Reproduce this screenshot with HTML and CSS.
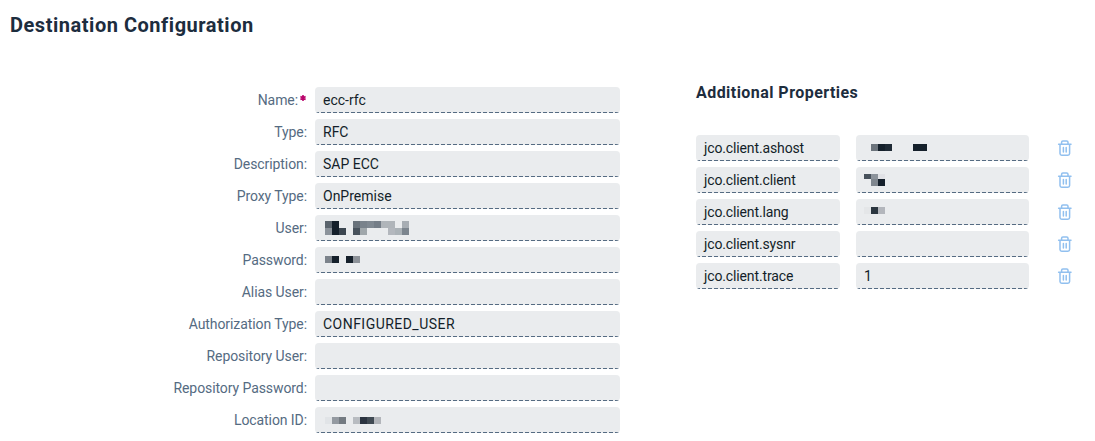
FILE: index.html
```
<!DOCTYPE html>
<html lang="en">
<head>
<meta charset="utf-8">
<title>Destination Configuration</title>
<link rel="stylesheet" href="styles.css">
</head>
<body>
<svg class="defs" width="0" height="0" aria-hidden="true">
  <symbol id="trash" viewBox="0 0 16 18">
    <path d="M1.6 5.2h12.4M4.6 4.9V3.2q0-1.3 1.3-1.3h3.8q1.3 0 1.3 1.3v1.7M3 5.4v9.2q0 1.7 1.7 1.7h6.2q1.7 0 1.7-1.7V5.4M6.4 8.4v4.6M9.2 8.4v4.6" fill="none" stroke="currentColor" stroke-width="1.5" stroke-linecap="round"/>
  </symbol>
</svg>
<main class="page">
  <h1 class="title">Destination Configuration</h1>
  <div class="content">
    <section class="form">
      <div class="label"><span>Name:</span><svg class="required" viewBox="0 0 8 8"><path d="M4 1v6M1.4 2.5l5.2 3M6.6 2.5l-5.2 3" stroke="currentColor" stroke-width="1.6"/></svg></div><div class="field">ecc-rfc</div>
      <div class="label">Type:</div><div class="field">RFC</div>
      <div class="label">Description:</div><div class="field">SAP ECC</div>
      <div class="label">Proxy Type:</div><div class="field">OnPremise</div>
      <div class="label">User:</div>
      <div class="field"><svg class="mask" width="100" height="26" shape-rendering="crispEdges">
        <g transform="translate(2 6)">
          <path fill="#5b646d" d="M0 0h7v7H0z"/><path fill="#15202b" d="M7 0h7v14H7z"/><path fill="#69727b" d="M28 0h7v7h-7z"/><path fill="#79828b" d="M35 0h7v7h-7z"/><path fill="#7f8891" d="M42 0h7v7h-7z"/><path fill="#747d87" d="M49 0h7v7h-7z"/><path fill="#b0b5ba" d="M56 0h14v7H56z"/><path fill="#a7adb3" d="M77 0h7v7h-7z"/>
          <path fill="#8c939b" d="M0 7h7v7H0z"/><path fill="#3c4650" d="M14 7h7v7h-7z"/><path fill="#48525c" d="M28 7h7v7h-7z"/><path fill="#a0a7ab" d="M35 7h7v7h-7z"/><path fill="#b3b7bd" d="M63 7h7v7h-7z"/><path fill="#abb2b7" d="M70 7h7v7h-7z"/><path fill="#7c858e" d="M77 7h7v7h-7z"/>
        </g></svg></div>
      <div class="label">Password:</div>
      <div class="field"><svg class="mask" width="100" height="26" shape-rendering="crispEdges">
        <path fill="#7c838b" d="M2 9h7v7H2z"/><path fill="#15202b" d="M9 9h7v7H9zM23 9h7v7h-7z"/><path fill="#8d9299" d="M30 9h7v7h-7z"/></svg></div>
      <div class="label">Alias User:</div><div class="field"></div>
      <div class="label">Authorization Type:</div><div class="field caps">CONFIGURED_USER</div>
      <div class="label">Repository User:</div><div class="field"></div>
      <div class="label">Repository Password:</div><div class="field"></div>
      <div class="label">Location ID:</div>
      <div class="field"><svg class="mask" width="100" height="26" shape-rendering="crispEdges">
        <path fill="#e1e4e7" d="M2 10h7v7H2z"/><path fill="#949aa1" d="M9 10h7v7H9z"/><path fill="#747b82" d="M16 10h7v7h-7z"/><path fill="#b8bcc1" d="M30 10h7v7h-7z"/><path fill="#2b3440" d="M37 10h7v7h-7z"/><path fill="#404a53" d="M44 10h7v7h-7z"/><path fill="#b2b5ba" d="M51 10h7v7h-7z"/></svg></div>
    </section>
    <section class="properties">
      <h2 class="subtitle">Additional Properties</h2>
      <div class="grid">
        <div class="field key">jco.client.ashost</div>
        <div class="field"><svg class="mask" width="100" height="26" shape-rendering="crispEdges">
          <path fill="#6c747c" d="M7 9h7v7H7z"/><path fill="#15202b" d="M14 9h7v7h-7zM49 9h14v7H49z"/><path fill="#1f2a35" d="M21 9h7v7h-7z"/></svg></div>
        <svg class="trash"><use href="#trash"/></svg>
        <div class="field key">jco.client.client</div>
        <div class="field"><svg class="mask" width="100" height="26" shape-rendering="crispEdges">
          <path fill="#48525c" d="M0 7h7v5H0z"/><path fill="#8c939b" d="M7 7h7v5H7z"/><path fill="#e1e2e6" d="M14 7h7v5h-7z"/><path fill="#80878f" d="M7 12h7v7H7z"/><path fill="#15202b" d="M14 12h7v7h-7z"/></svg></div>
        <svg class="trash"><use href="#trash"/></svg>
        <div class="field key">jco.client.lang</div>
        <div class="field"><svg class="mask" width="100" height="26" shape-rendering="crispEdges">
          <path fill="#e4e6e8" d="M0 8h7v7H0z"/><path fill="#2b3640" d="M7 8h7v7H7z"/><path fill="#b3b6bc" d="M14 8h7v7h-7z"/></svg></div>
        <svg class="trash"><use href="#trash"/></svg>
        <div class="field key">jco.client.sysnr</div>
        <div class="field"></div>
        <svg class="trash"><use href="#trash"/></svg>
        <div class="field key">jco.client.trace</div>
        <div class="field">1</div>
        <svg class="trash"><use href="#trash"/></svg>
      </div>
    </section>
  </div>
</main>
</body>
</html>
```
FILE: styles.css
```
* { box-sizing: border-box; }
body { margin: 0; background: #fff; color: #131e29; font-family: Roboto, "Liberation Sans", sans-serif; font-size: 14px; overflow: hidden; }
.defs { display: block; height: 0; }
.page { width: 1095px; height: 441px; padding: 10px 10px 0; }
.title { margin: 0; height: 30px; font-size: 20px; line-height: 30px; font-weight: 700; letter-spacing: 0.53px; color: #1d2d3e; }
.content { display: flex; padding-top: 47px; }
.form { display: grid; grid-template-columns: 297px 305px; grid-auto-rows: 26px; column-gap: 8px; row-gap: 6px; }
.label { display: flex; justify-content: flex-end; line-height: 26px; letter-spacing: -0.08px; color: #556b82; white-space: nowrap; }
.required { width: 8px; height: 8px; margin: 7px 0 0 1px; color: #ba066c; }
.field {
  height: 26px; padding: 0 8px; line-height: 26px; border-radius: 4px; white-space: nowrap; overflow: hidden;
  background: repeating-linear-gradient(90deg, #556b82 0 4px, transparent 4px 6px) 0 100% / 100% 1px no-repeat, #eaecee;
}
.caps { letter-spacing: 0.47px; }
.key { letter-spacing: -0.13px; }
.mask { display: block; }
.properties { margin-left: 76px; }
.subtitle { margin: -5px 0 0; height: 22px; font-size: 16px; line-height: 22px; letter-spacing: 0.45px; color: #1d2d3e; }
.grid { display: grid; grid-template-columns: 144px 173px 16px; grid-auto-rows: 26px; column-gap: 16px; row-gap: 6px; padding-top: 31px; }
.trash { width: 16px; height: 18px; margin: 4px 0 0 11.7px; color: #91c0ef; }
```
